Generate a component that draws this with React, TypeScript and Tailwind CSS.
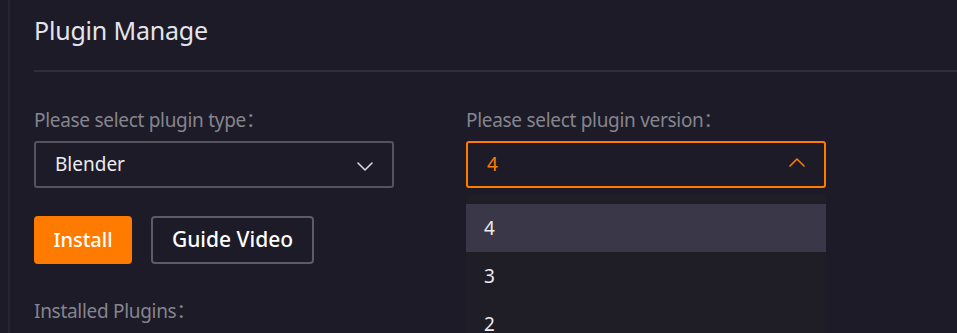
import React from "react";

function Chevron({ up = false, className = "" }: { up?: boolean; className?: string }) {
  return (
    <svg
      viewBox="0 0 16 9"
      className={className}
      fill="none"
      stroke="currentColor"
      strokeWidth="1.6"
      strokeLinecap="round"
      strokeLinejoin="round"
    >
      {up ? <path d="M1 8L8 1l7 7" /> : <path d="M1 1l7 7 7-7" />}
    </svg>
  );
}

const versions = ["4", "3", "2", "1"];

export default function App() {
  return (
    <main className="flex h-[333px] w-[957px] overflow-hidden bg-[#1c1b27] font-['Noto_Sans','Noto_Sans_CJK_SC',sans-serif]">
      <div className="ml-2 w-[2px] shrink-0 bg-[#262431]" />

      <div className="relative flex-1 pl-6">
        <h1 className="h-[70px] pt-[13px] text-[25px] leading-[34px] tracking-[-0.2px] text-[#e4e4ea]">
          Plugin Manage
        </h1>
        <div className="h-[2px] bg-[#302e3a]" />

        <div className="mt-[36px] flex gap-[72px]">
          {/* Plugin type */}
          <div className="w-[360px]">
            <label className="block text-[19px] leading-[24px] tracking-[-0.3px] text-[#86858e]">
              Please select plugin type：
            </label>
            <button className="mt-[9px] flex h-[47px] w-full items-center justify-between rounded-[3px] border-2 border-[#55545e] pl-[19px] pr-[19px] pb-[1px] text-[19px] leading-[24px] text-[#ececf0]">
              <span>Blender</span>
              <Chevron className="mt-[5px] h-[9px] w-[16px] text-[#d8d8de]" />
            </button>
          </div>

          {/* Plugin version */}
          <div className="w-[360px]">
            <label className="block text-[19px] leading-[24px] tracking-[-0.3px] text-[#86858e]">
              Please select plugin version：
            </label>
            <div className="relative mt-[9px]">
              <button className="flex h-[47px] w-full items-center justify-between rounded-[3px] border-2 border-[#ff7b00] pl-[19px] pr-[19px] pb-[1px] text-[19px] leading-[24px] text-[#ff7b00]">
                <span>4</span>
                <Chevron up className="mb-[4px] h-[9px] w-[16px]" />
              </button>

              {/* Dropdown menu */}
              <ul className="absolute left-0 top-[54px] z-10 w-full rounded-t-[3px] bg-[#1f1e26] pt-[9px]">
                {versions.map((v, i) => (
                  <li
                    key={v}
                    className={
                      i === 0
                        ? "flex h-[48px] items-center bg-[#3a3748] px-[18px] text-[19px] text-[#ececf0]"
                        : "flex h-[48px] items-center px-[18px] text-[19px] text-[#ececf0]"
                    }
                  >
                    {v}
                  </li>
                ))}
              </ul>
            </div>
          </div>
        </div>

        <div className="mt-[28px] flex gap-[19px]">
          <button className="h-[48px] w-[98px] rounded-[4px] bg-[#ff7b00] text-[20px] font-medium text-white">
            Install
          </button>
          <button className="h-[48px] w-[163px] rounded-[4px] border-2 border-[#5c5b66] text-[21px] font-medium text-white">
            Guide Video
          </button>
        </div>

        <p className="mt-[35px] text-[19px] leading-[24px] tracking-[-0.3px] text-[#86858e]">
          Installed Plugins：
        </p>
      </div>
    </main>
  );
}
